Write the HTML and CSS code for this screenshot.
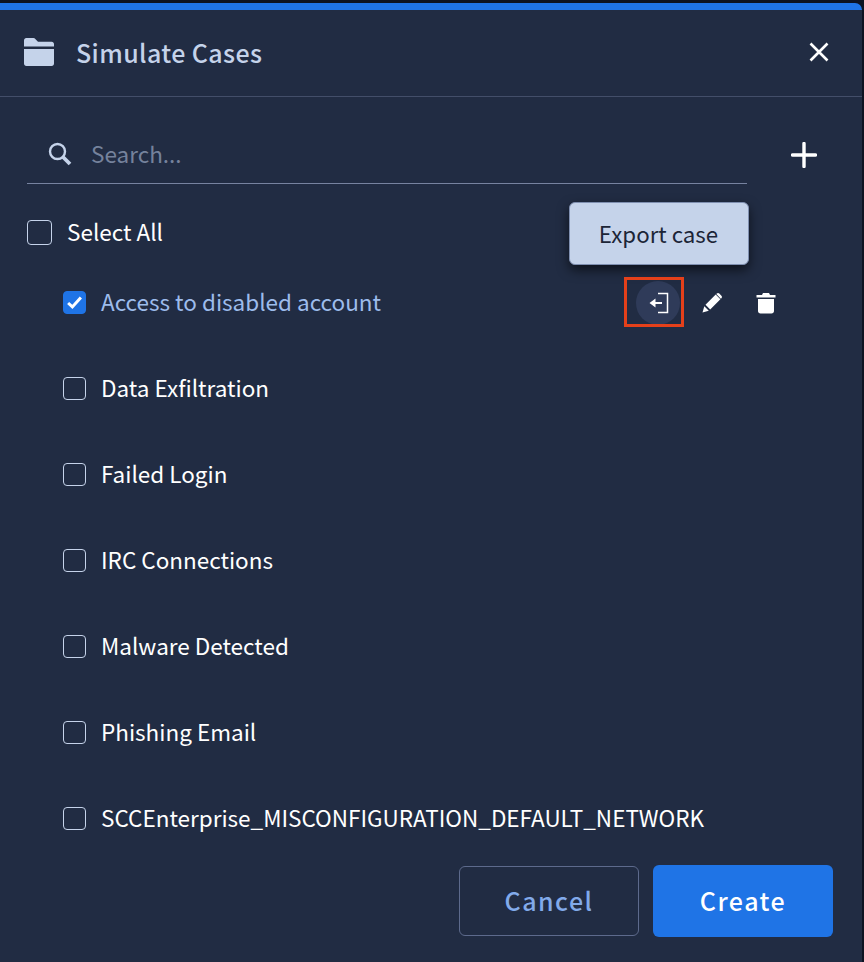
FILE: index.html
```html
<!DOCTYPE html>
<html lang="en">
<head>
<meta charset="utf-8">
<title>Simulate Cases</title>
<link rel="stylesheet" href="styles.css">
</head>
<body>
<div class="dialog">
  <header class="head">
    <svg class="folder" width="32" height="30" viewBox="0 0 32 30"><path d="M1 3.500C1 2 2 1 3.300 1h7.200c.8 0 1.300.3 1.800.9L15 4.700h13.700C30 4.700 31 5.700 31 7v2.500H1zM1 12h30v14.500c0 1.400-1 2.500-2.400 2.500H3.400C2 29 1 27.900 1 26.500z" fill="#c5d3ea"/></svg>
    <h1 class="title">Simulate Cases</h1>
    <svg class="close" width="20" height="20" viewBox="0 0 20 20"><path d="M1.500 1.500l17 17M18.500 1.500l-17 17" stroke="#fff" stroke-width="2.600" fill="none"/></svg>
  </header>
  <div class="search-row">
    <div class="search">
      <svg class="search-icon" width="24" height="24" viewBox="0 0 24 24"><circle cx="9.500" cy="9.500" r="7.500" stroke="#c5d3ea" stroke-width="2.400" fill="none"/><path d="M15 15l7 7" stroke="#c5d3ea" stroke-width="3.800" fill="none"/></svg>
      <span class="placeholder">Search...</span>
    </div>
    <svg class="plus" width="26" height="26" viewBox="0 0 26 26"><path d="M13 1.500v23M1.500 13h23" stroke="#fff" stroke-width="3.400" fill="none" stroke-linecap="round"/></svg>
  </div>
  <label class="select-all"><span class="box box-all"></span><span class="name-all">Select All</span></label>
  <ul class="cases">
    <li class="case is-active">
      <span class="box box-on"><svg width="17" height="17" viewBox="0 0 16 16"><path d="M2 8.500l4 3.700 8-9" stroke="#fff" stroke-width="2.800" fill="none"/></svg></span>
      <span class="name">Access to disabled account</span>
      <div class="actions">
        <span class="action action-export">
          <svg width="22" height="22" viewBox="0 0 22 22"><path d="M11 1.500h9.500v19H11" stroke="#fff" stroke-width="1.500" fill="none"/><path d="M15 10.100H8.500V6.500L2.500 11l6 4.500v-3.600H15z" fill="#fff"/></svg>
        </span>
        <span class="action">
          <svg width="22" height="22" viewBox="0 0 22 22"><path d="M1.500 20.500l1.800-6.300 4.500 4.500zM4.500 12.800L14.700 2.600l4.700 4.700L9.200 17.500zM15.800 1.600c.7-.7 1.800-.7 2.500 0l2.100 2.100c.7.700.7 1.800 0 2.500l-.5.500-4.600-4.600z" fill="#fff"/></svg>
        </span>
        <span class="action">
          <svg width="22" height="22" viewBox="0 0 22 22"><path d="M8 1h6l1 2h5.500v2.500h-19V3H7zM3 7h16v12c0 1.500-1 2.500-2.500 2.500h-11C4 21.500 3 20.500 3 19z" fill="#fff"/></svg>
        </span>
        <div class="tooltip">Export case</div>
        <span class="marker"></span>
      </div>
    </li>
    <li class="case"><span class="box"></span><span class="name">Data Exfiltration</span></li>
    <li class="case"><span class="box"></span><span class="name">Failed Login</span></li>
    <li class="case"><span class="box"></span><span class="name">IRC Connections</span></li>
    <li class="case"><span class="box"></span><span class="name">Malware Detected</span></li>
    <li class="case"><span class="box"></span><span class="name">Phishing Email</span></li>
    <li class="case"><span class="box"></span><span class="name">SCCEnterprise_MISCONFIGURATION_DEFAULT_NETWORK</span></li>
  </ul>
  <footer class="foot">
    <button class="btn btn-cancel">Cancel</button>
    <button class="btn btn-create">Create</button>
  </footer>
</div>
</body>
</html>
```
FILE: styles.css
```css
* { box-sizing: border-box; }
html, body { margin: 0; height: 100%; }
body {
  background: #0d1322;
  font-family: "Noto Sans CJK JP", "Noto Sans", sans-serif;
  overflow: hidden;
  padding: 3px 2px 0 0;
}
.dialog {
  height: 959px;
  background: #212c43;
  border-top: 7px solid #1f74e6;
  border-top-right-radius: 7px;
  display: flex;
  flex-direction: column;
  color: #fff;
}
.head {
  height: 87px;
  border-bottom: 1px solid #434e69;
  display: flex;
  align-items: center;
  padding: 0 33px 2px 23px;
}
.title {
  margin: 0 0 0 21px;
  font-size: 25px;
  font-weight: 500;
  color: #c5d3ea;
  flex: 1;
  letter-spacing: 0.4px;
}
.search-row {
  display: flex;
  align-items: center;
  padding: 28px 0 0 27px;
}
.search {
  width: 720px;
  height: 59px;
  border-bottom: 1px solid #7783a0;
  display: flex;
  align-items: center;
  padding: 0 0 0 21px;
}
.search-icon { margin-right: 19px; }
.placeholder { font-size: 22.5px; color: #75829c; padding-bottom: 2px; }
.plus { margin-left: 44px; }
.select-all {
  display: flex;
  align-items: center;
  margin: 28px 0 0 27px;
  height: 40px;
  font-size: 22.5px;
}
.name-all { padding-bottom: 2px; }
.box {
  width: 23px;
  height: 23px;
  border: 1.500px solid #c5d3ea;
  border-radius: 4px;
  flex: none;
  display: flex;
  align-items: center;
  justify-content: center;
}
.box-all { width: 25px; height: 25px; margin-right: 15px; }
.box-on { background: #1f74e6; border-color: #1f74e6; }
.cases { list-style: none; margin: 0; padding: 0 0 0 63px; }
.case {
  height: 86px;
  display: flex;
  align-items: center;
  font-size: 22.5px;
}
.case:first-child { margin-top: 10px; height: 80px; margin-bottom: 3px; }
.name { margin-left: 15px; padding-bottom: 2px; }
.is-active .name { color: #9dbcec; }
.actions {
  position: relative;
  display: flex;
  align-items: center;
  margin-left: auto;
  margin-right: 74px;
  margin-top: 2px;
}
.action {
  width: 44px;
  height: 44px;
  display: flex;
  align-items: center;
  justify-content: center;
  margin-left: 10px;
  border-radius: 50%;
}
.action-export { background: #2f3b59; }
.marker {
  position: absolute;
  left: -2px;
  top: -4px;
  width: 60px;
  height: 50px;
  border: 3px solid #e5401a;
}
.tooltip {
  position: absolute;
  left: -57px;
  top: -79px;
  width: 180px;
  height: 63px;
  background: #c5d3ea;
  color: #1c2537;
  border: 1px solid #7f8fb0;
  border-radius: 6px;
  padding: 0 1px 2px 0;
  font-size: 22.3px;
  display: flex;
  align-items: center;
  justify-content: center;
  box-shadow: 0 5px 12px rgba(0, 0, 0, .6);
}
.foot {
  display: flex;
  justify-content: flex-end;
  align-items: center;
  gap: 14px;
  padding: 0 29px 0 0;
  margin-top: 4px;
}
.btn {
  font-family: inherit;
  font-size: 25px;
  font-weight: 500;
  letter-spacing: 1.500px;
  border-radius: 6px;
  width: 180px;
  padding: 0 0 2px;
}
.btn-cancel {
  height: 70px;
  background: transparent;
  border: 1px solid #5d6a8c;
  color: #82aaea;
}
.btn-create {
  height: 72px;
  background: #1f74e6;
  border: none;
  color: #fff;
}
```
